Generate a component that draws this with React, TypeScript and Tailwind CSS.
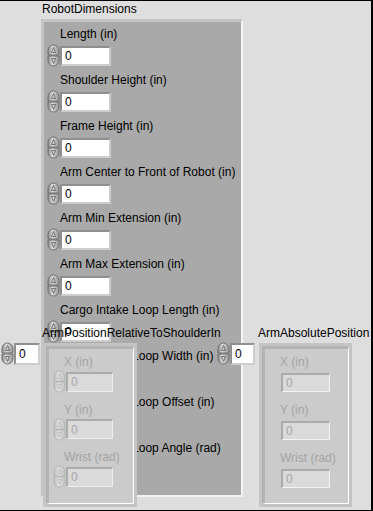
import { useId } from 'react';

const robotFields = [
  'Length (in)',
  'Shoulder Height (in)',
  'Frame Height (in)',
  'Arm Center to Front of Robot (in)',
  'Arm Min Extension (in)',
  'Arm Max Extension (in)',
  'Cargo Intake Loop Length (in)',
  'Cargo Intake Loop Width (in)',
  'Cargo Intake Loop Offset (in)',
  'Cargo Intake Loop Angle (rad)',
];

const posFields = ['X (in)', 'Y (in)', 'Wrist (rad)'];

function Spinner({ disabled = false }: { disabled?: boolean }) {
  const id = useId();
  const edge = disabled ? '#b4b4b4' : '#6f6f6f';
  const arrow = disabled ? '#b8b8b8' : '#5e5e5e';
  return (
    <svg width="13" height="23" viewBox="0 0 13 23" className="shrink-0">
      <defs>
        <linearGradient id={id} x1="0" y1="0" x2="1" y2="0">
          <stop offset="0" stopColor={disabled ? '#bcbcbc' : '#858585'} />
          <stop offset="0.4" stopColor={disabled ? '#e2e2e2' : '#dcdcdc'} />
          <stop offset="1" stopColor={disabled ? '#c2c2c2' : '#959595'} />
        </linearGradient>
      </defs>
      <path d="M1 11 V6.5 A5.5 5.5 0 0 1 12 6.5 V11 Z" fill={`url(#${id})`} stroke={edge} />
      <path d="M1 12 V16.5 A5.5 5.5 0 0 0 12 16.5 V12 Z" fill={`url(#${id})`} stroke={edge} />
      <path d="M6.5 3.5 L8.5 8.5 H4.5 Z" fill="none" stroke={arrow} strokeWidth="0.8" />
      <path d="M6.5 19.5 L8.5 14.5 H4.5 Z" fill="none" stroke={arrow} strokeWidth="0.8" />
    </svg>
  );
}

function Control({ boxW, boxH, disabled = false }: { boxW: string; boxH: string; disabled?: boolean }) {
  return (
    <div className="flex items-center">
      <Spinner disabled={disabled} />
      <div
        className={
          disabled
            ? `${boxW} ${boxH} flex items-center border-t-2 border-l-2 border-r border-b border-t-[#ababab] border-l-[#ababab] border-r-[#eeeeee] border-b-[#eeeeee] bg-[#dadada] pl-[3px] text-[#a6a6a6]`
            : `${boxW} ${boxH} flex items-center border-2 border-t-[#8f8f8f] border-l-[#8f8f8f] border-r-[#cdcdcd] border-b-[#cdcdcd] bg-white pl-[3px] text-black`
        }
      >
        0
      </div>
    </div>
  );
}

function Indicator() {
  return (
    <div className="ml-px mt-[3px] flex h-[19px] w-[49px] items-center border-t-2 border-l-2 border-r border-b border-t-[#ababab] border-l-[#ababab] border-r-[#f2f2f2] border-b-[#f2f2f2] bg-[#dadada] pl-[3px] text-[#a6a6a6]">
      0
    </div>
  );
}

export default function App() {
  return (
    <div className="relative h-[511px] w-[373px] overflow-hidden bg-[#dedede] font-['Liberation_Sans',Arial,sans-serif] text-[12px] text-black shadow-[inset_0_1px_0_#000,inset_-2px_0_0_#000,inset_0_-1px_0_#000]">
      <span className="absolute left-[42px] top-[1px] whitespace-nowrap leading-[16px]">RobotDimensions</span>

      {/* RobotDimensions cluster */}
      <div className="absolute left-[41px] top-[19px] h-[478px] w-[202px] overflow-hidden border-t-[3px] border-l-[3px] border-r-2 border-b-2 border-t-[#c4c4c4] border-l-[#c4c4c4] border-r-[#f4f4f4] border-b-[#f4f4f4] bg-[#a9a9a9] pl-[3px] pt-[4px]">
        <div className="flex flex-col gap-[5px]">
          {robotFields.map((f) => (
            <div key={f} className="flex flex-col gap-[2px]">
              <span className="ml-[13px] h-[16px] whitespace-nowrap leading-[16px]">{f}</span>
              <Control boxW="w-[51px]" boxH="h-[20px]" />
            </div>
          ))}
        </div>
      </div>

      <span className="absolute left-[42px] top-[325px] whitespace-nowrap leading-[16px]">ArmPositionRelativeToShoulderIn</span>

      {/* unlabeled numerics */}
      <div className="absolute left-[1px] top-[342px]">
        <Control boxW="w-[26px]" boxH="h-[22px]" />
      </div>

      {/* ArmPositionRelativeToShoulderIn cluster */}
      <div className="absolute left-[43px] top-[343px] h-[164px] w-[94px] border-[3px] border-[#c4c4c4]">
        <div className="h-full border-t-[3px] border-l-[3px] border-r border-b border-t-[#b3b3b3] border-l-[#b3b3b3] border-r-white border-b-white bg-[#cbcbcb] pl-[4px] pt-[6px]">
          <div className="flex flex-col gap-[9.5px]">
            {posFields.map((f) => (
              <div key={f} className="flex flex-col">
                <span className="h-[15px] whitespace-nowrap pl-[11px] leading-[15px] text-[#a3a3a3]">{f}</span>
                <Control boxW="w-[47px]" boxH="h-[20px]" disabled />
              </div>
            ))}
          </div>
        </div>
      </div>

      <div className="absolute left-[217px] top-[342px]">
        <Control boxW="w-[25px]" boxH="h-[22px]" />
      </div>

      <span className="absolute left-[258px] top-[325px] whitespace-nowrap leading-[16px]">ArmAbsolutePosition</span>

      {/* ArmAbsolutePosition cluster */}
      <div className="absolute left-[259px] top-[343px] h-[164px] w-[93px] border-[3px] border-[#c4c4c4]">
        <div className="h-full border-t-[3px] border-l-[3px] border-r border-b border-t-[#b3b3b3] border-l-[#b3b3b3] border-r-white border-b-white bg-[#cbcbcb] pl-[15px] pt-[6px]">
          <div className="flex flex-col gap-[11px]">
            {posFields.map((f) => (
              <div key={f} className="flex flex-col">
                <span className="h-[15px] whitespace-nowrap leading-[15px] text-[#a3a3a3]">{f}</span>
                <Indicator />
              </div>
            ))}
          </div>
        </div>
      </div>
    </div>
  );
}
